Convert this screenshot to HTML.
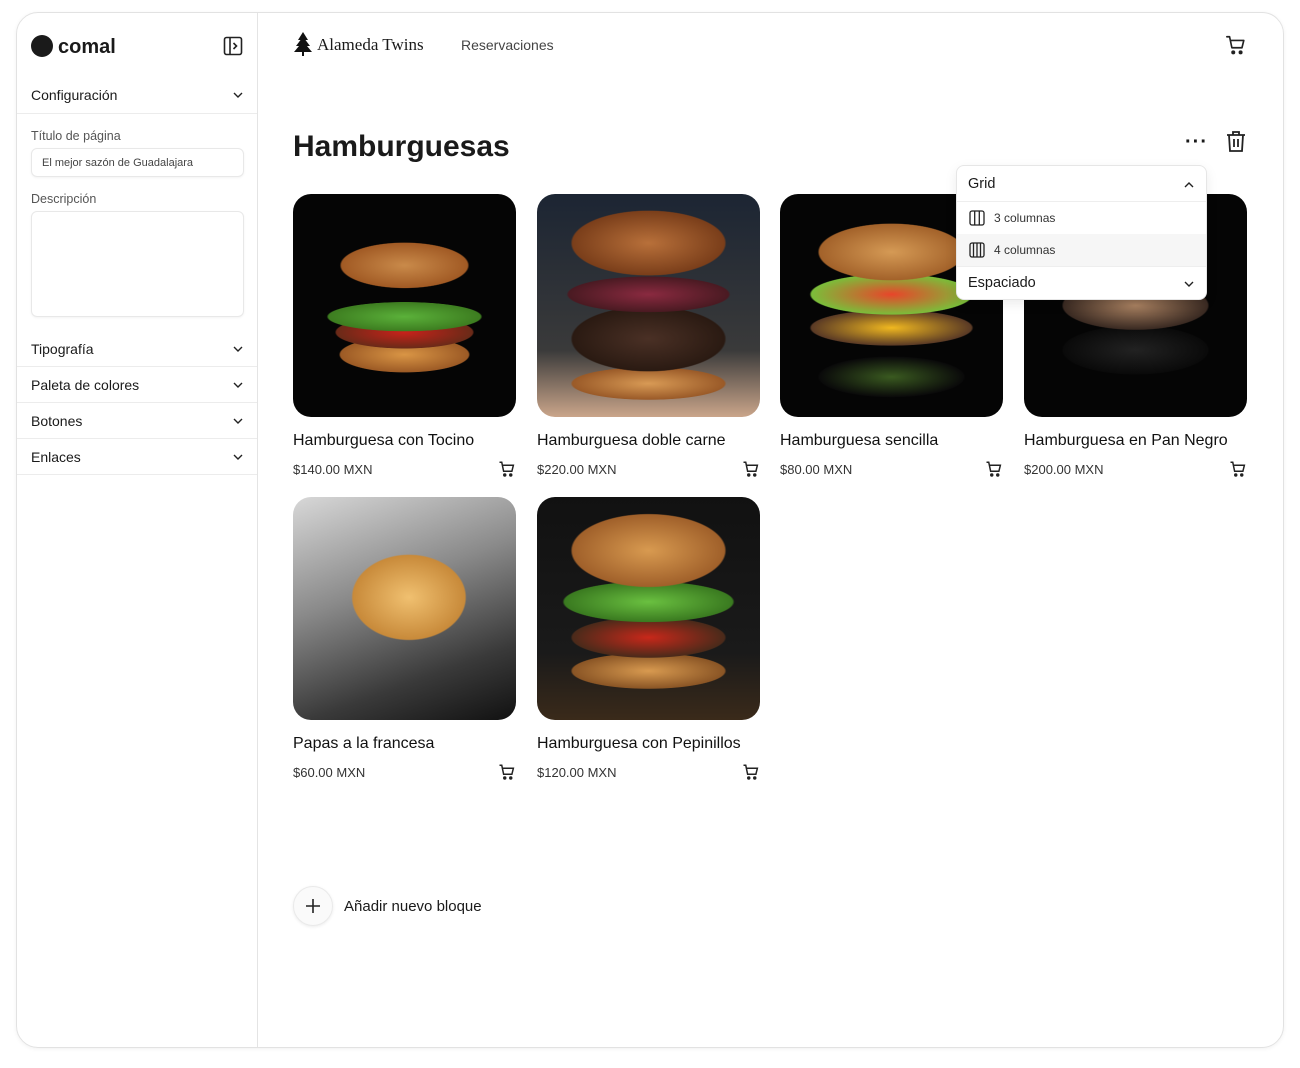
<!DOCTYPE html>
<html><head><meta charset="utf-8">
<style>
*{box-sizing:border-box;margin:0;padding:0}
body{width:1300px;height:1068px;background:#fff;font-family:"Liberation Sans",sans-serif;color:#1a1a1a;position:relative;overflow:hidden}
.a{position:absolute}
.frame{left:16px;top:12px;width:1268px;height:1036px;border:1px solid #e2e2e2;border-radius:22px;box-shadow:0 1px 4px rgba(0,0,0,.06);overflow:hidden}
.side{left:0;top:0;width:241px;height:100%;border-right:1px solid #e4e4e4}
.row{position:absolute;left:0;width:240px;height:36px;border-bottom:1px solid #ececec;font-size:14px;padding:0 14px;display:flex;align-items:center;justify-content:space-between}
.chev{width:10px;height:10px}
.card{position:absolute;width:223px}
.img{width:223px;height:223px;border-radius:18px;overflow:hidden;position:relative;background:#050505}
.t{font-size:16px;margin-top:15px;color:#111}
.p{font-size:13px;color:#333;margin-top:10px;display:flex;justify-content:space-between;align-items:center}
.lbl{font-size:12.5px;color:#555}
</style></head><body>
<div class="a frame">
 <div class="a side">
  <div class="a" style="left:14px;top:22px;width:22px;height:22px;border-radius:50%;background:#1a1a1a"></div>
  <div class="a" style="left:41px;top:23px;font-size:20px;font-weight:bold">comal</div>
  <svg class="a" style="left:206px;top:23px" width="20" height="20" viewBox="0 0 20 20" fill="none" stroke="#222" stroke-width="1.6"><rect x="1.5" y="1.5" width="17" height="17" rx="2"/><line x1="7" y1="1.5" x2="7" y2="18.5"/><path d="M10.5 7l3 3-3 3"/></svg>
  <div class="row" style="top:64px;height:37px"><span>Configuración</span><svg class="chev" viewBox="0 0 10 10" fill="none" stroke="#222" stroke-width="1.4"><path d="M1 3l4 4 4-4"/></svg></div>
  <div class="a lbl" style="left:14px;top:116px">Título de página</div>
  <div class="a" style="left:14px;top:135px;width:213px;height:29px;border:1px solid #e8e8e8;border-radius:6px;font-size:11px;color:#444;padding:8px 10px;box-shadow:0 1px 2px rgba(0,0,0,.05)">El mejor sazón de Guadalajara</div>
  <div class="a lbl" style="left:14px;top:179px">Descripción</div>
  <div class="a" style="left:14px;top:198px;width:213px;height:106px;border:1px solid #e8e8e8;border-radius:6px;box-shadow:0 1px 2px rgba(0,0,0,.05)"></div>
  <div class="row" style="top:318px;border-top:0"><span>Tipografía</span><svg class="chev" viewBox="0 0 10 10" fill="none" stroke="#222" stroke-width="1.4"><path d="M1 3l4 4 4-4"/></svg></div>
  <div class="row" style="top:354px"><span>Paleta de colores</span><svg class="chev" viewBox="0 0 10 10" fill="none" stroke="#222" stroke-width="1.4"><path d="M1 3l4 4 4-4"/></svg></div>
  <div class="row" style="top:390px"><span>Botones</span><svg class="chev" viewBox="0 0 10 10" fill="none" stroke="#222" stroke-width="1.4"><path d="M1 3l4 4 4-4"/></svg></div>
  <div class="row" style="top:426px"><span>Enlaces</span><svg class="chev" viewBox="0 0 10 10" fill="none" stroke="#222" stroke-width="1.4"><path d="M1 3l4 4 4-4"/></svg></div>
 </div>
</div>
<svg class="a" style="left:293px;top:32px" width="20" height="24" viewBox="0 0 20 24" fill="#111"><path d="M10 0L5 8h2.5L3 14h3L1 20h8v4h2v-4h8l-5-6h3l-4.5-6H15z"/></svg>
<div class="a" style="left:317px;top:35px;font-family:'Liberation Serif',serif;font-size:17px">Alameda Twins</div>
<div class="a" style="left:461px;top:37px;font-size:14px;color:#444">Reservaciones</div>
<svg class="a" style="left:1225px;top:34px" width="22" height="22" viewBox="0 0 24 24" fill="none" stroke="#222" stroke-width="1.8" stroke-linecap="round" stroke-linejoin="round"><path d="M2 3h3l2.5 12h11l2-8H6"/><circle cx="9" cy="20" r="1.3" fill="#222"/><circle cx="17" cy="20" r="1.3" fill="#222"/></svg>
<div class="a" style="left:293px;top:130px;font-size:30px;font-weight:bold;color:#1a1a1a">Hamburguesas</div>
<div class="a" style="left:1185px;top:131px;font-size:20px;letter-spacing:1px;font-weight:bold">···</div>
<svg class="a" style="left:1226px;top:130px" width="20" height="22" viewBox="0 0 20 22" fill="none" stroke="#222" stroke-width="1.8"><path d="M1 5h18M7 5V2h6v3M3 5l1 16h12l1-16M8 9v8M12 9v8"/></svg>

<div class="card" style="left:293px;top:194px"><div class="img" style="background:radial-gradient(ellipse 90px 32px at 50% 32%,#c98a4a,#a15a24 70%,transparent 72%),radial-gradient(ellipse 95px 18px at 50% 55%,#5bb13a,#3d7d20 80%,transparent 82%),radial-gradient(ellipse 85px 20px at 50% 62%,#c8221a,#6a2a18 80%,transparent 82%),radial-gradient(ellipse 80px 22px at 50% 72%,#d99545,#9c5a25 80%,transparent 82%),#050505"></div><div class="t">Hamburguesa con Tocino</div><div class="p"><span>$140.00 MXN</span><svg width="18" height="18" viewBox="0 0 24 24" fill="none" stroke="#222" stroke-width="2"><path d="M2 3h3l2.5 12h11l2-8H6"/><circle cx="9" cy="20" r="1.3" fill="#222"/><circle cx="17" cy="20" r="1.3" fill="#222"/></svg></div></div>
<div class="card" style="left:537px;top:194px"><div class="img" style="background:radial-gradient(ellipse 95px 40px at 50% 22%,#b8703a,#7a3e1a 80%,transparent 82%),radial-gradient(ellipse 100px 22px at 50% 45%,#8a2a40,#4a1a22 80%,transparent 82%),radial-gradient(ellipse 95px 40px at 50% 65%,#4a3025,#2a1a12 80%,transparent 82%),radial-gradient(ellipse 95px 20px at 50% 85%,#d89a55,#9a5a28 80%,transparent 82%),linear-gradient(#1c2533,#3a3a3a 70%,#caa58a)"></div><div class="t">Hamburguesa doble carne</div><div class="p"><span>$220.00 MXN</span><svg width="18" height="18" viewBox="0 0 24 24" fill="none" stroke="#222" stroke-width="2"><path d="M2 3h3l2.5 12h11l2-8H6"/><circle cx="9" cy="20" r="1.3" fill="#222"/><circle cx="17" cy="20" r="1.3" fill="#222"/></svg></div></div>
<div class="card" style="left:780px;top:194px"><div class="img" style="background:radial-gradient(ellipse 90px 35px at 50% 26%,#d59a55,#a3622a 80%,transparent 82%),radial-gradient(ellipse 100px 25px at 50% 45%,#e8452a,#7bbd3a 80%,transparent 82%),radial-gradient(ellipse 100px 22px at 50% 60%,#f0b820,#5a3a25 80%,transparent 82%),radial-gradient(ellipse 90px 25px at 50% 82%,#3a5a20,#0a0a0a 80%,transparent 82%),#050505"></div><div class="t">Hamburguesa sencilla</div><div class="p"><span>$80.00 MXN</span><svg width="18" height="18" viewBox="0 0 24 24" fill="none" stroke="#222" stroke-width="2"><path d="M2 3h3l2.5 12h11l2-8H6"/><circle cx="9" cy="20" r="1.3" fill="#222"/><circle cx="17" cy="20" r="1.3" fill="#222"/></svg></div></div>
<div class="card" style="left:1024px;top:194px"><div class="img" style="background:radial-gradient(ellipse 90px 30px at 50% 50%,#a88060,#3a2a22 80%,transparent 82%),radial-gradient(ellipse 90px 30px at 50% 70%,#222,#0a0a0a 80%,transparent 82%),#050505"></div><div class="t">Hamburguesa en Pan Negro</div><div class="p"><span>$200.00 MXN</span><svg width="18" height="18" viewBox="0 0 24 24" fill="none" stroke="#222" stroke-width="2"><path d="M2 3h3l2.5 12h11l2-8H6"/><circle cx="9" cy="20" r="1.3" fill="#222"/><circle cx="17" cy="20" r="1.3" fill="#222"/></svg></div></div>
<div class="card" style="left:293px;top:497px"><div class="img" style="background:radial-gradient(ellipse 80px 60px at 52% 45%,#f0c070,#c88a3a 70%,transparent 72%),linear-gradient(160deg,#d8d8d8,#8a8a8a 40%,#3a3a3a 75%,#111)"></div><div class="t">Papas a la francesa</div><div class="p"><span>$60.00 MXN</span><svg width="18" height="18" viewBox="0 0 24 24" fill="none" stroke="#222" stroke-width="2"><path d="M2 3h3l2.5 12h11l2-8H6"/><circle cx="9" cy="20" r="1.3" fill="#222"/><circle cx="17" cy="20" r="1.3" fill="#222"/></svg></div></div>
<div class="card" style="left:537px;top:497px"><div class="img" style="background:radial-gradient(ellipse 95px 45px at 50% 24%,#d89a50,#a0602a 80%,transparent 82%),radial-gradient(ellipse 105px 25px at 50% 47%,#6ac040,#3a7a20 80%,transparent 82%),radial-gradient(ellipse 95px 25px at 50% 63%,#c8281a,#4a2a1a 80%,transparent 82%),radial-gradient(ellipse 95px 22px at 50% 78%,#d89a50,#8a5525 80%,transparent 82%),linear-gradient(#111,#1a1a1a 70%,#3a2a1a)"></div><div class="t">Hamburguesa con Pepinillos</div><div class="p"><span>$120.00 MXN</span><svg width="18" height="18" viewBox="0 0 24 24" fill="none" stroke="#222" stroke-width="2"><path d="M2 3h3l2.5 12h11l2-8H6"/><circle cx="9" cy="20" r="1.3" fill="#222"/><circle cx="17" cy="20" r="1.3" fill="#222"/></svg></div></div>

<div class="a" style="left:956px;top:165px;width:251px;height:135px;background:#fff;border:1px solid #e6e6e6;border-radius:8px;box-shadow:0 4px 12px rgba(0,0,0,.08);overflow:hidden">
 <div class="a" style="left:11px;top:10px;font-size:14.5px">Grid</div>
 <svg class="a" style="left:227px;top:14px" width="10" height="10" viewBox="0 0 10 10" fill="none" stroke="#222" stroke-width="1.4"><path d="M1 7l4-4 4 4"/></svg>
 <div class="a" style="left:0;top:35px;width:100%;height:1px;background:#eee"></div>
 <svg class="a" style="left:12px;top:44px" width="16" height="16" viewBox="0 0 16 16" fill="none" stroke="#222" stroke-width="1.3"><rect x="1" y="1" width="14" height="14" rx="2"/><path d="M5.7 1v14M10.3 1v14"/></svg>
 <div class="a" style="left:37px;top:45px;font-size:12px;color:#333">3 columnas</div>
 <div class="a" style="left:0;top:68px;width:100%;height:32px;background:#f6f6f6"></div>
 <svg class="a" style="left:12px;top:76px" width="16" height="16" viewBox="0 0 16 16" fill="none" stroke="#222" stroke-width="1.3"><rect x="1" y="1" width="14" height="14" rx="2"/><path d="M4.5 1v14M8 1v14M11.5 1v14"/></svg>
 <div class="a" style="left:37px;top:77px;font-size:12px;color:#333">4 columnas</div>
 <div class="a" style="left:0;top:100px;width:100%;height:1px;background:#eee"></div>
 <div class="a" style="left:11px;top:109px;font-size:14.5px">Espaciado</div>
 <svg class="a" style="left:227px;top:113px" width="10" height="10" viewBox="0 0 10 10" fill="none" stroke="#222" stroke-width="1.4"><path d="M1 3l4 4 4-4"/></svg>
</div>

<div class="a" style="left:293px;top:886px;width:40px;height:40px;border-radius:50%;border:1px solid #eaeaea;background:#fafafa;box-shadow:0 1px 3px rgba(0,0,0,.08)"></div>
<svg class="a" style="left:305px;top:898px" width="16" height="16" viewBox="0 0 16 16" stroke="#222" stroke-width="1.6"><path d="M8 1v14M1 8h14"/></svg>
<div class="a" style="left:344px;top:898px;font-size:15px">Añadir nuevo bloque</div>
</body></html>
